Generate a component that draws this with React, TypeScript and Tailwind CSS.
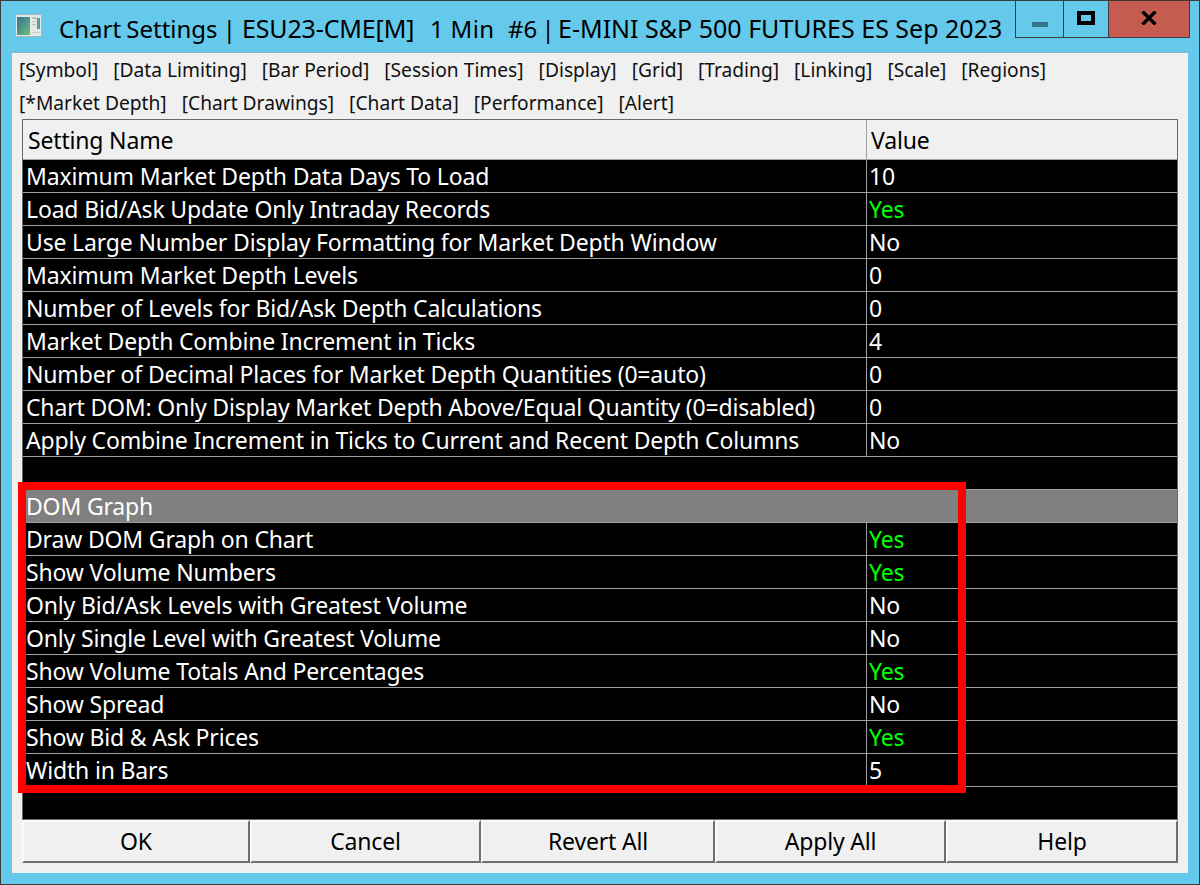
const tabRows = [
  ["[Symbol]", "[Data Limiting]", "[Bar Period]", "[Session Times]", "[Display]", "[Grid]", "[Trading]", "[Linking]", "[Scale]", "[Regions]"],
  ["[*Market Depth]", "[Chart Drawings]", "[Chart Data]", "[Performance]", "[Alert]"],
];

const depthRows = [
  ["Maximum Market Depth Data Days To Load", "10"],
  ["Load Bid/Ask Update Only Intraday Records", "Yes"],
  ["Use Large Number Display Formatting for Market Depth Window", "No"],
  ["Maximum Market Depth Levels", "0"],
  ["Number of Levels for Bid/Ask Depth Calculations", "0"],
  ["Market Depth Combine Increment in Ticks", "4"],
  ["Number of Decimal Places for Market Depth Quantities (0=auto)", "0"],
  ["Chart DOM: Only Display Market Depth Above/Equal Quantity (0=disabled)", "0"],
  ["Apply Combine Increment in Ticks to Current and Recent Depth Columns", "No"],
];

const domRows = [
  ["Draw DOM Graph on Chart", "Yes"],
  ["Show Volume Numbers", "Yes"],
  ["Only Bid/Ask Levels with Greatest Volume", "No"],
  ["Only Single Level with Greatest Volume", "No"],
  ["Show Volume Totals And Percentages", "Yes"],
  ["Show Spread", "No"],
  ["Show Bid & Ask Prices", "Yes"],
  ["Width in Bars", "5"],
];

const buttons = [
  ["OK", "w-[228px]"],
  ["Cancel", "w-[231px]"],
  ["Revert All", "w-[234px]"],
  ["Apply All", "w-[231px]"],
  ["Help", "w-[232px]"],
];

function Row({ name, value }: { name: string; value: string }) {
  return (
    <div className="flex h-[33px] border-b border-[#a0a0a0] text-white">
      <div className="w-[844px] border-r border-[#a0a0a0] pl-[3px] leading-[32px] whitespace-nowrap">{name}</div>
      <div className={"pl-[2px] leading-[32px] " + (value === "Yes" ? "text-[#00ff00]" : "text-white")}>{value}</div>
    </div>
  );
}

function WindowIcon() {
  return (
    <svg width="27" height="23" viewBox="0 0 27 23" className="ml-[14px] mt-[13px] shrink-0">
      <defs>
        <linearGradient id="pane" x1="0" y1="0" x2="1" y2="1">
          <stop offset="0" stopColor="#2b7390" />
          <stop offset="1" stopColor="#76bd78" />
        </linearGradient>
      </defs>
      <rect x="0.5" y="0.5" width="26" height="22" fill="#e4eaea" stroke="#a3b6be" />
      <rect x="2" y="3" width="13" height="18" fill="url(#pane)" />
      <rect x="17" y="3" width="5" height="2" fill="#b4bfc3" />
      <rect x="17" y="7" width="4" height="1" fill="#b9c3c6" />
      <rect x="17" y="10" width="4" height="1" fill="#b9c3c6" />
      <rect x="22" y="4" width="3" height="11" fill="#5a9c88" />
      <rect x="17" y="18" width="7" height="1" fill="#c4ccce" />
    </svg>
  );
}

export default function App() {
  return (
    <div className="relative flex h-[885px] w-[1200px] flex-col overflow-hidden border border-[#3c3c3c] bg-[#65c9eb] font-['Noto_Sans','Open_Sans',sans-serif] text-black">
      {/* title bar */}
      <div className="flex h-[51px] shrink-0 items-start">
        <WindowIcon />
        <div className="ml-[17px] mt-[8px] flex items-baseline text-[24px] leading-[38px] whitespace-pre">
          <span className="w-[183px] [word-spacing:-1px]">Chart Settings |</span>
          <span className="w-[188px] text-[25px] tracking-[-0.15px]">ESU23-CME[M]</span>
          <span className="w-[78px] tracking-[0.3px]">1 Min</span>
          <span className="w-[50px] [word-spacing:-2px]">#6 |</span>
          <span className="text-[25px]">E-MINI S&amp;P 500 FUTURES ES Sep 2023</span>
        </div>
        <div className="absolute right-[9px] top-0 flex h-[37px] border-x border-b border-[#3c3c3c]">
          <div className="flex w-[48px] items-center justify-center border-r border-[#3c3c3c]">
            <div className="mt-[11px] h-[5px] w-[16px] bg-[#35748c]" />
          </div>
          <div className="flex w-[45px] items-center justify-center border-r border-[#3c3c3c]">
            <div className="mb-[3px] h-[14px] w-[18px] border-[4px] border-black" />
          </div>
          <div className="flex w-[80px] items-center justify-center bg-[#c45c50]">
            <svg width="16" height="14" viewBox="0 0 16 14" className="mb-[2px]">
              <path d="M1.5 0.5 L14.5 13.5 M14.5 0.5 L1.5 13.5" stroke="#000" strokeWidth="3.4" />
            </svg>
          </div>
        </div>
      </div>

      {/* client area */}
      <div className="mx-[11px] flex h-[821px] shrink-0 flex-col border-t border-[#8fb4c4] bg-[#f0f0f0] px-[10px]">
        <div className="-mt-px h-[67px] shrink-0 pt-[1px]">
          {tabRows.map((row, i) => (
            <div key={i} className="-ml-[3px] flex h-[33px] gap-[15px] text-[19.2px] leading-[33px] text-[#101010]">
              {row.map((tab) => (
                <span key={tab}>{tab}</span>
              ))}
            </div>
          ))}
        </div>

        <div className="flex h-[701px] w-[1156px] shrink-0 flex-col border border-[#696969] bg-black text-[23px] tracking-[-0.17px]">
          <div className="flex h-[39px] shrink-0 bg-[#f0f0f0] text-black">
            <div className="w-[844px] border-r border-[#a0a0a0] pl-[5px] leading-[41px]">Setting Name</div>
            <div className="pl-[4px] leading-[41px]">Value</div>
          </div>
          <div className="h-px shrink-0 bg-[#a0a0a0]" />
          {depthRows.map(([name, value]) => (
            <Row key={name} name={name} value={value} />
          ))}
          <div className="h-[33px] shrink-0 border-b border-[#a0a0a0]" />
          <div className="h-[33px] shrink-0 border-b border-[#a0a0a0] bg-[#808080] pl-[3px] leading-[33px] text-white">DOM Graph</div>
          {domRows.map(([name, value]) => (
            <Row key={name} name={name} value={value} />
          ))}
        </div>

        <div className="flex h-[43px] w-[1156px] shrink-0">
          {buttons.map(([label, width]) => (
            <div
              key={label}
              className={width + " flex items-center justify-center border-2 border-t-[#fafafa] border-l-[#fafafa] border-r-[#6e6e6e] border-b-[#6e6e6e] bg-[#f0f0f0] text-[23px] tracking-[-0.17px]"}
            >
              {label}
            </div>
          ))}
        </div>
      </div>

      {/* red annotation frame */}
      <div className="absolute left-[17px] top-[481px] h-[311px] w-[948px] border-[8px] border-[#ff0000]" />
    </div>
  );
}
